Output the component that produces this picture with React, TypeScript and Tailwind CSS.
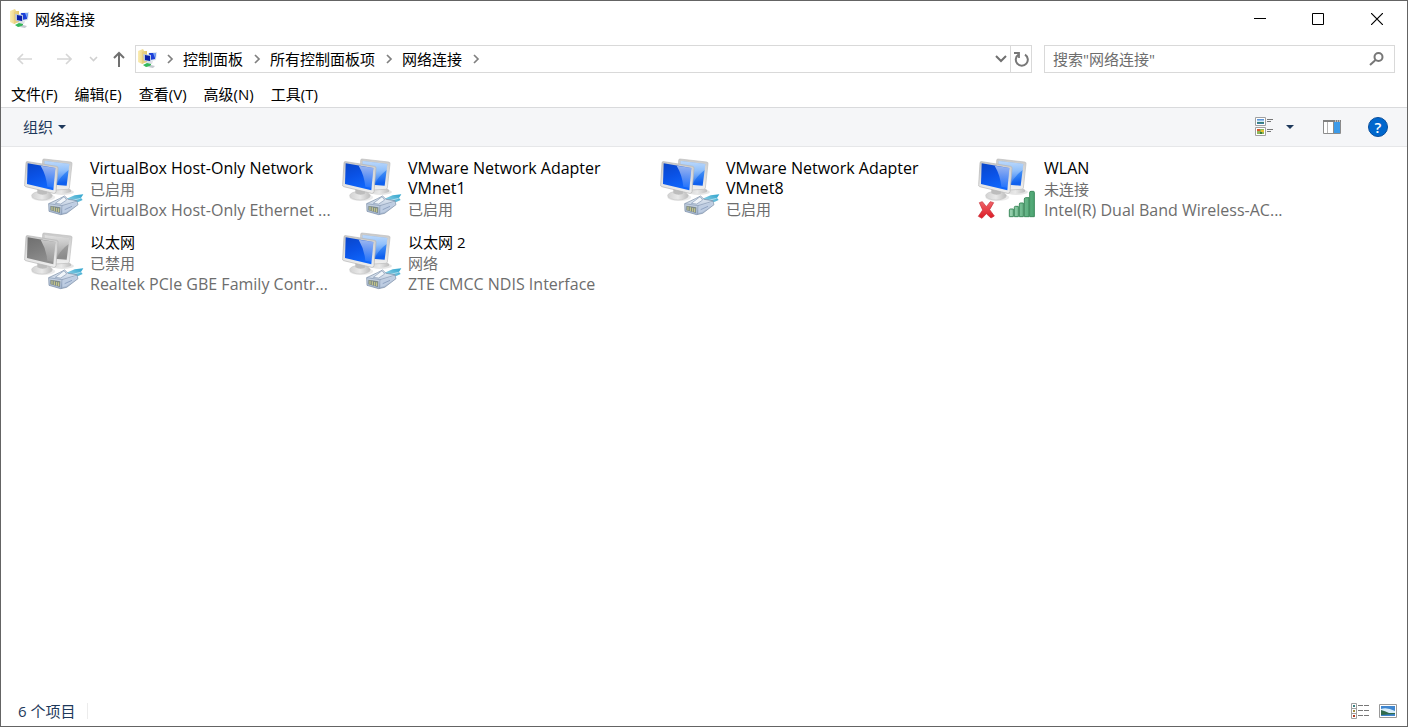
import { Fragment } from 'react';
import clsx from 'clsx';

type IconKind = 'ethernet' | 'disabled' | 'wifi-off';

interface Connection {
  name: string;
  status: string;
  device?: string;
  icon: IconKind;
}

const menus = ['文件(F)', '编辑(E)', '查看(V)', '高级(N)', '工具(T)'];

const crumbs = ['控制面板', '所有控制面板项', '网络连接'];

const connections: Connection[] = [
  {
    name: 'VirtualBox Host-Only Network',
    status: '已启用',
    device: 'VirtualBox Host-Only Ethernet ...',
    icon: 'ethernet',
  },
  { name: 'VMware Network Adapter VMnet1', status: '已启用', icon: 'ethernet' },
  { name: 'VMware Network Adapter VMnet8', status: '已启用', icon: 'ethernet' },
  { name: 'WLAN', status: '未连接', device: 'Intel(R) Dual Band Wireless-AC...', icon: 'wifi-off' },
  { name: '以太网', status: '已禁用', device: 'Realtek PCIe GBE Family Contr...', icon: 'disabled' },
  { name: '以太网 2', status: '网络', device: 'ZTE CMCC NDIS Interface', icon: 'ethernet' },
];

function Gradients() {
  return (
    <svg width="0" height="0" className="absolute" aria-hidden="true">
      <defs>
        <linearGradient id="screen-front" x1="0" y1="0" x2="0.4" y2="1">
          <stop offset="0" stopColor="#0a45c8" />
          <stop offset="0.5" stopColor="#0a52e6" />
          <stop offset="1" stopColor="#0f66fb" />
        </linearGradient>
        <linearGradient id="screen-back" x1="0" y1="0" x2="0.2" y2="1">
          <stop offset="0" stopColor="#5da2f5" />
          <stop offset="0.5" stopColor="#4c99f8" />
          <stop offset="1" stopColor="#0f60ee" />
        </linearGradient>
        <linearGradient id="screen-front-off" x1="0" y1="0" x2="0.4" y2="1">
          <stop offset="0" stopColor="#6f6f6f" />
          <stop offset="0.5" stopColor="#7d7d7d" />
          <stop offset="1" stopColor="#8f8f8f" />
        </linearGradient>
        <linearGradient id="screen-back-off" x1="0" y1="0" x2="0.2" y2="1">
          <stop offset="0" stopColor="#b4b4b4" />
          <stop offset="1" stopColor="#8c8c8c" />
        </linearGradient>
        <linearGradient id="glare" x1="0" y1="0" x2="0" y2="1">
          <stop offset="0" stopColor="#fff" stopOpacity="0.6" />
          <stop offset="1" stopColor="#fff" stopOpacity="0.08" />
        </linearGradient>
        <linearGradient id="bezel" x1="0" y1="0" x2="0" y2="1">
          <stop offset="0" stopColor="#c9c9c9" />
          <stop offset="1" stopColor="#efefef" />
        </linearGradient>
        <linearGradient id="stand" x1="0" y1="0" x2="1" y2="0">
          <stop offset="0" stopColor="#d2d2d2" />
          <stop offset="0.5" stopColor="#e9e9e9" />
          <stop offset="1" stopColor="#bcbcbc" />
        </linearGradient>
        <linearGradient id="cable" x1="0" y1="1" x2="1" y2="0">
          <stop offset="0" stopColor="#b4dfec" />
          <stop offset="1" stopColor="#2ba3cd" />
        </linearGradient>
        <linearGradient id="plug" x1="0" y1="0" x2="0" y2="1">
          <stop offset="0" stopColor="#e6edf5" />
          <stop offset="1" stopColor="#a3b5cf" />
        </linearGradient>
        <linearGradient id="signal" x1="0" y1="0" x2="1" y2="0">
          <stop offset="0" stopColor="#9ad2b0" />
          <stop offset="1" stopColor="#4aa471" />
        </linearGradient>
        <linearGradient id="cross" x1="0" y1="0" x2="0" y2="1">
          <stop offset="0" stopColor="#f0646a" />
          <stop offset="1" stopColor="#dc1a24" />
        </linearGradient>
        <linearGradient id="folder" x1="0" y1="0" x2="1" y2="0">
          <stop offset="0" stopColor="#fbedb4" />
          <stop offset="1" stopColor="#e3c568" />
        </linearGradient>
        <linearGradient id="photo" x1="0" y1="0" x2="0" y2="1">
          <stop offset="0" stopColor="#3f7fd0" />
          <stop offset="0.5" stopColor="#d3ebfa" />
          <stop offset="0.6" stopColor="#3c7a58" />
          <stop offset="1" stopColor="#3b84b8" />
        </linearGradient>
      </defs>
    </svg>
  );
}

function EthernetPlug() {
  return (
    <g strokeLinejoin="round">
      <path d="M142 136 L170 124 L196 121 L189 132 L194 138 L160 154 Z" fill="url(#cable)" />
      <path d="M160 140 L188 133" stroke="#d8eff7" strokeWidth="2" />
      <path d="M92 149 L124 134 L140 126 L150 136 L176 140 L180 152 L146 178 L128 182 L93 172 Z" fill="url(#plug)" stroke="#7488a2" strokeWidth="2" />
      <path d="M92 149 L132 155 L178 141 M132 155 L130 181" fill="none" stroke="#8397b2" strokeWidth="2" />
      <path d="M112 148 L138 128 L146 138 L128 150 Z" fill="#f2f6fa" stroke="#8599b3" strokeWidth="2" />
      <path d="M134 158 L176 144 L176 151 L146 173 L134 177 Z" fill="#becde2" />
      <path d="M140 167 L162 157" stroke="#8fa3c2" strokeWidth="3" />
      <path d="M97 155 L127 160 L126 177 L97 169 Z" fill="#7d8a88" />
      <path d="M102 158 V169 M109 160 V171 M116 162 V173 M122 163 V174" stroke="#cfcf8c" strokeWidth="3" />
    </g>
  );
}

function ConnectionIcon({ kind }: { kind: IconKind }) {
  const off = kind === 'disabled';

  return (
    <svg width="70" height="70" viewBox="0 0 210 210" fill="none" className="shrink-0" aria-hidden="true">
      <ellipse cx="134" cy="114" rx="34" ry="9" fill="#000" opacity="0.1" />
      <ellipse cx="130" cy="110" rx="30" ry="9" fill="url(#stand)" />
      {/* back monitor */}
      <path d="M74 19 Q74 15 78 15 L158 24 Q163 25 162 29 L154 102 Q153 106 148 106 L110 108 L72 90 Z" fill="url(#bezel)" stroke="#bdbdbd" strokeWidth="2" />
      <path d="M80 21 L154 30 L146 95 L80 90 Z" fill={off ? 'url(#screen-back-off)' : 'url(#screen-back)'} />
      <path d="M80 21 L154 30 L152 48 Q128 66 116 90 L80 60 Z" fill="url(#glare)" />
      {/* front monitor */}
      <ellipse cx="76" cy="130" rx="36" ry="11" fill="#000" opacity="0.08" />
      <ellipse cx="72" cy="125" rx="31" ry="13" fill="url(#stand)" stroke="#c9c9c9" strokeWidth="2" />
      <path d="M58 102 L88 108 L86 120 Q70 125 58 118 Z" fill="#bdbdbd" />
      <path d="M24 27 Q24 22 30 23 L116 37 Q121 38 120 43 L114 113 Q113 119 107 118 L23 98 Q19 97 20 92 Z" fill="url(#bezel)" stroke="#b4b4b4" strokeWidth="2" />
      <path d="M29 28 L112 42 L106 109 L27 90 Z" fill={off ? 'url(#screen-front-off)' : 'url(#screen-front)'} />
      <path d="M68 35 L112 42 L107 102 L88 98 Q85 64 68 35 Z" fill="url(#glare)" />
      {kind === 'wifi-off' ? (
        <>
          <path d="M22 146 L31 143 L43 158 L55 143 L65 146 L53 167 L67 186 L57 192 L43 179 L30 193 L19 187 L32 168 Z" fill="url(#cross)" stroke="#c62a33" strokeWidth="2" strokeLinejoin="round" />
          <path d="M112 168 Q112 165 115 165 H124 V188 H112 Z M127 160 Q127 157 130 157 H139 V188 H127 Z M142 150 Q142 147 145 147 H154 V188 H142 Z M157 135 Q157 131 161 131 H171 V188 H157 Z M173 115 Q173 112 177 112 H184 Q187 112 187 115 V188 H173 Z" fill="url(#signal)" stroke="#3d8a5d" strokeWidth="3" strokeLinejoin="round" />
        </>
      ) : (
        <EthernetPlug />
      )}
    </svg>
  );
}

function FolderIcon() {
  return (
    <svg width="20" height="20" viewBox="0 0 20 20" className="shrink-0" aria-hidden="true">
      <path d="M0 2 L5 0 L6 2 L9 2 V13 L4 15 L0 13 Z" fill="url(#folder)" />
      <path d="M4 3 L7 2 V13 L4 15 Z" fill="#e8cf80" />
      <path d="M10 4 L19 3 L18 11 L12 12 Z" fill="#d8e2ee" />
      <path d="M11 4 L18 4 L17 10 L12 11 Z" fill="#1d40d8" />
      <path d="M15 4 L18 4 L17 9 Z" fill="#7aa6f4" />
      <path d="M5 5 L13 6 L13 13 L6 12 Z" fill="#b8c7e0" />
      <path d="M7 6 L12 7 L12 12 L7 11 Z" fill="#0b1fa8" />
      <path d="M8 13 L15 12 L14 15 L8 15 Z" fill="#dfe2e6" />
      <path d="M5 16 L9 14 L13 15 L13 17 L8 18 Z" fill="#35b85a" />
      <path d="M13 16 L17 17 L15 19 L10 18 Z" fill="#c3c9ce" />
    </svg>
  );
}

function ChevronRight() {
  return (
    <svg width="27" height="12" viewBox="0 0 27 12" fill="none" className="shrink-0" aria-hidden="true">
      <path d="M12 2 L16 6 L12 10" stroke="#808080" strokeWidth="1.7" />
    </svg>
  );
}

function Caret() {
  return (
    <svg width="8" height="4" viewBox="0 0 8 4" aria-hidden="true">
      <path d="M0 0 H8 L4 4 Z" fill="#1e395b" />
    </svg>
  );
}

function TitleBar() {
  return (
    <header className="flex h-9 shrink-0 items-center pl-[9px]">
      <FolderIcon />
      <h1 className="ml-[5px] flex-1">网络连接</h1>
      <div className="flex self-stretch">
        <button type="button" aria-label="最小化" className="flex w-[58px] items-center justify-center">
          <svg width="12" height="12" viewBox="0 0 12 12">
            <path d="M0 5 H12 V6 H0 Z" />
          </svg>
        </button>
        <button type="button" aria-label="最大化" className="flex w-[58px] items-center justify-center">
          <svg width="12" height="12" viewBox="0 0 12 12" fill="none" stroke="#000">
            <path d="M0.5 0.5 H11.5 V11.5 H0.5 Z" />
          </svg>
        </button>
        <button type="button" aria-label="关闭" className="flex w-[60px] items-center justify-center">
          <svg width="12" height="12" viewBox="0 0 12 12" fill="none" stroke="#000" strokeWidth="1.2">
            <path d="M0 0 L12 12 M12 0 L0 12" />
          </svg>
        </button>
      </div>
    </header>
  );
}

function NavigationBar() {
  return (
    <div className="flex h-11 shrink-0 items-center pr-3 pl-4">
      <nav aria-label="导航" className="flex w-[118px] items-center">
        <button type="button" aria-label="后退" disabled>
          <svg width="16" height="12" viewBox="0 0 16 12" fill="none" stroke="#d6d6d6" strokeWidth="1.6">
            <path d="M15 6 H1 M6 1 L1 6 L6 11" />
          </svg>
        </button>
        <button type="button" aria-label="前进" className="ml-[23px]" disabled>
          <svg width="16" height="12" viewBox="0 0 16 12" fill="none" stroke="#d6d6d6" strokeWidth="1.6">
            <path d="M1 6 H15 M10 1 L15 6 L10 11" />
          </svg>
        </button>
        <button type="button" aria-label="最近浏览的位置" className="ml-[17px]" disabled>
          <svg width="9" height="6" viewBox="0 0 9 6" fill="none" stroke="#d0d0d0" strokeWidth="1.6">
            <path d="M1 1 L4.5 4.5 L8 1" />
          </svg>
        </button>
        <button type="button" aria-label="上移" className="ml-[14px]">
          <svg width="14" height="16" viewBox="0 0 14 16" fill="none" stroke="#707070" strokeWidth="2">
            <path d="M7 16 V2 M2 7 L7 2 L12 7" />
          </svg>
        </button>
      </nav>

      <div className="flex h-7 flex-1 items-center border border-[#d9d9d9]">
        <span className="ml-[2px] w-[18px]">
          <FolderIcon />
        </span>
        <ChevronRight />
        {crumbs.map((crumb) => (
          <Fragment key={crumb}>
            <a href="#">{crumb}</a>
            <ChevronRight />
          </Fragment>
        ))}
        <button type="button" aria-label="以前的位置" className="mr-[3px] ml-auto">
          <svg width="12" height="8" viewBox="0 0 12 8" fill="none" stroke="#707070" strokeWidth="2">
            <path d="M1 1 L6 6 L11 1" />
          </svg>
        </button>
        <button type="button" aria-label="刷新" className="flex w-[21px] items-center justify-center self-stretch border-l border-[#d9d9d9]">
          <svg width="16" height="16" viewBox="0 0 16 16" fill="none" stroke="#777" strokeWidth="2">
            <path d="M12 3.6 A6 6 0 1 1 5.6 3.6" />
            <path d="M1 2 H6 V7" strokeWidth="1.8" />
          </svg>
        </button>
      </div>

      <div className="ml-3 flex h-7 w-[351px] items-center border border-[#d9d9d9] pr-[10px] pl-2">
        <input
          type="search"
          aria-label="搜索"
          placeholder='搜索"网络连接"'
          className="min-w-0 flex-1 outline-none placeholder:text-[#6d6d6d]"
        />
        <svg width="15" height="14" viewBox="0 0 15 14" fill="none" stroke="#777" strokeWidth="2" aria-hidden="true">
          <circle cx="9.5" cy="5" r="4" />
          <path d="M6.5 8 L1 13" />
        </svg>
      </div>
    </div>
  );
}

function MenuBar() {
  return (
    <nav aria-label="菜单" className="flex h-[26px] shrink-0 items-center gap-[17px] pl-[10px]">
      {menus.map((menu) => (
        <button key={menu} type="button">
          {menu}
        </button>
      ))}
    </nav>
  );
}

function Toolbar() {
  return (
    <div className="flex h-10 shrink-0 items-center border-t border-b border-t-[#d9dadc] border-b-[#e6e7e9] bg-[#f5f6f8] pr-[19px] pl-[22px] text-[#1e395b]">
      <button type="button" className="flex items-center gap-[5px]">
        组织
        <Caret />
      </button>
      <button type="button" aria-label="更改视图" className="mr-[13px] ml-auto">
        <svg width="18" height="20" viewBox="0 0 18 20" aria-hidden="true">
          <path d="M0.5 0.5 H10.5 V8.5 H0.5 Z M0.5 10.5 H10.5 V18.5 H0.5 Z" fill="#fff" stroke="#a0a0a0" />
          <path d="M2 2 H9 V7 H2 Z" fill="url(#photo)" />
          <path d="M2 12 H9 V17 H2 Z" fill="#8fb65a" />
          <path d="M2 12 H5 V14 H2 Z" fill="#d8572a" />
          <path d="M6 13 H9 V15 H6 Z" fill="#e8c22e" />
          <path d="M5 15 H7 V17 H5 Z" fill="#3a7d34" />
          <path d="M12 2.5 H18 M12 4.5 H16 M12 12.5 H18 M12 14.5 H16" stroke="#777" />
        </svg>
      </button>
      <button type="button" aria-label="更多选项" className="flex h-5 items-center">
        <Caret />
      </button>
      <button type="button" aria-label="显示预览窗格" className="ml-[29px]">
        <svg width="18" height="14" viewBox="0 0 18 14" aria-hidden="true">
          <path d="M0.5 0.5 H17.5 V13.5 H0.5 Z" fill="#fff" stroke="#8c8c8c" />
          <path d="M0 0 H18 V2 H0 Z" fill="#808080" />
          <path d="M12 1 H13 M14 1 H15 M16 1 H17" stroke="#fff" />
          <path d="M4.5 2 V13" stroke="#b5b5b5" />
          <path d="M11 2 H17 V13 H11 Z" fill="#3d9be9" />
          <path d="M10.5 2 V13" stroke="#8c8c8c" />
        </svg>
      </button>
      <button type="button" aria-label="获取帮助" className="ml-[27px] flex size-5 items-center justify-center rounded-full border border-[#084e9c] bg-[#0067cd] font-semibold text-white">
        ?
      </button>
    </div>
  );
}

function ConnectionItem({ connection }: { connection: Connection }) {
  const { name, status, device, icon } = connection;
  // Latin names are set one step larger than the Chinese ones
  const isLatin = /^[A-Za-z]/.test(name);

  return (
    <li className="flex h-[74px] items-start">
      <ConnectionIcon kind={icon} />
      <div className="mt-1 ml-[2px] w-[240px]">
        <p className={clsx('leading-5', isLatin && 'text-base/5')}>{name}</p>
        <div className="pt-px leading-[21px] whitespace-nowrap text-[#6d6d6d]">
          <p>{status}</p>
          {device && <p className="text-base/[21px]">{device}</p>}
        </div>
      </div>
    </li>
  );
}

function StatusBar() {
  return (
    <footer className="flex h-[31px] shrink-0 items-center pr-[10px] pl-[17px] text-[#1e395b]">
      <span>6 个项目</span>
      <span className="ml-3 h-4 w-px bg-[#ececec]" />
      <button type="button" aria-label="详细信息" className="ml-auto">
        <svg width="18" height="16" viewBox="0 0 18 16" fill="none" aria-hidden="true">
          <path d="M0.5 0.5 H5.5 V15.5 H0.5 Z M0 5.5 H6 M0 10.5 H6" stroke="#a0a0a0" />
          <path d="M2 2 H4 V4 H2 Z" fill="#3b8080" />
          <path d="M2 7 H4 V9 H2 Z" fill="#a08a3c" />
          <path d="M2 12 H4 V14 H2 Z" fill="#b03a22" />
          <path d="M7 2.5 H12 M13 2.5 H18 M7 7.5 H12 M13 7.5 H18 M7 12.5 H12 M13 12.5 H18" stroke="#777" />
        </svg>
      </button>
      <button type="button" aria-label="大缩略图" className="ml-[10px]">
        <svg width="18" height="14" viewBox="0 0 18 14" fill="none" aria-hidden="true">
          <path d="M0.5 0.5 H17.5 V13.5 H0.5 Z" fill="#fff" stroke="#999" />
          <path d="M2 2 H16 V12 H2 Z" fill="#3f86cf" />
          <path d="M2 5 Q8 3 16 7 V9 H2 Z" fill="#d8edfa" />
          <path d="M2 6 Q6 7 10 9 L16 9 V10 L2 11 Z" fill="#2f6b4c" />
        </svg>
      </button>
    </footer>
  );
}

export default function App() {
  return (
    <div className="flex h-screen flex-col border border-[#646464] bg-white font-['Open_Sans','Noto_Sans_CJK_SC',sans-serif] text-[15px] leading-5 text-black">
      <Gradients />
      <TitleBar />
      <NavigationBar />
      <MenuBar />
      <Toolbar />
      <main className="min-h-0 flex-1 overflow-auto pt-[7px] pl-[17px]">
        <ul className="grid grid-cols-[repeat(auto-fill,318px)]">
          {connections.map((connection) => (
            <ConnectionItem key={connection.name} connection={connection} />
          ))}
        </ul>
      </main>
      <StatusBar />
    </div>
  );
}
